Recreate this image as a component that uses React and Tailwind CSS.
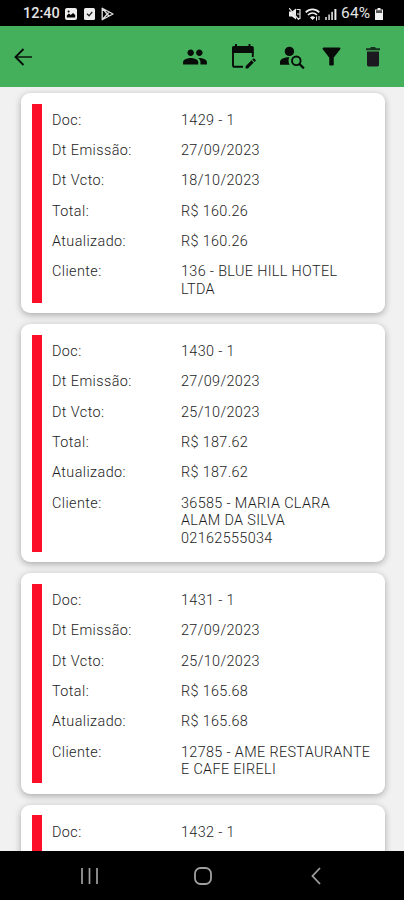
import { MdFilterAlt, MdPeople } from 'react-icons/md'

const documents = [
  { doc: '1429 - 1', issued: '27/09/2023', due: '18/10/2023', total: 'R$ 160.26', updated: 'R$ 160.26', client: ['136 - BLUE HILL HOTEL', 'LTDA'] },
  { doc: '1430 - 1', issued: '27/09/2023', due: '25/10/2023', total: 'R$ 187.62', updated: 'R$ 187.62', client: ['36585 - MARIA CLARA', 'ALAM DA SILVA', '02162555034'] },
  { doc: '1431 - 1', issued: '27/09/2023', due: '25/10/2023', total: 'R$ 165.68', updated: 'R$ 165.68', client: ['12785 - AME RESTAURANTE', 'E CAFE EIRELI'] },
  { doc: '1432 - 1' },
]

function StatusBar() {
  return (
    <div className="h-[26px] shrink-0 bg-black text-[#e4e4e4] flex items-center pl-[23px] pr-[21px]">
      <span className="text-[14.5px] leading-none font-medium w-[42px] mt-[2px]">12:40</span>
      <svg viewBox="0 0 12 12" className="w-[12px] h-[12px] mt-[2px]">
        <rect width="12" height="12" rx="2" fill="#eee" />
        <path d="M1.8 9.5v-2l2-2 2 1.6 2.2-2 2.2 2v2.4z" fill="#000" />
        <circle cx="3.6" cy="3.5" r="1" fill="#000" />
      </svg>
      <svg viewBox="0 0 11 12" className="w-[11px] h-[12px] ml-[7px] mt-[2px]">
        <rect width="11" height="12" rx="1.5" fill="#eee" />
        <path d="M3 5.8l2 2 3.2-3.8" fill="none" stroke="#222" strokeWidth="1.3" />
      </svg>
      <svg viewBox="0 0 13 14" className="w-[13px] h-[14px] ml-[6px] mt-[2px]" fill="none" stroke="#ddd" strokeWidth="1.3">
        <path d="M1.2 1.2v11.6L12 7zM1.2 1.2L8 9M1.2 12.8L8 5" strokeLinejoin="round" />
      </svg>
      <div className="ml-auto flex items-center mt-[2px]">
        <svg viewBox="0 0 12 12" className="w-[12px] h-[12px]">
          <path d="M0 3.5h3l4-3v11l-4-3H0z" fill="#eee" />
          <path d="M0 0l10 12M7.5 1.5H11v9H8M8 6h3" stroke="#ddd" strokeWidth="1.2" fill="none" />
        </svg>
        <svg viewBox="0 0 16 13" className="w-[16px] h-[13px] ml-[4px]" fill="none" stroke="#eee" strokeWidth="1.6">
          <path d="M.7 4.4C4.5.3 10.5.3 14.3 4.4M3 7c2.6-2.7 6.4-2.7 9 0" />
          <path d="M5 9.5c1.6-1.7 3.6-1.7 5.2 0L7.6 12z" fill="#eee" stroke="none" />
          <path d="M11.5 8.5v4M14 8v4" strokeWidth="1" />
        </svg>
        <svg viewBox="0 0 12 12" className="w-[12px] h-[12px] ml-[4px]">
          <rect x="0" y="9" width="2" height="3" fill="#aaa" />
          <rect x="3.2" y="6.5" width="1.8" height="5.5" fill="#bbb" />
          <rect x="6.2" y="3.8" width="1.8" height="8.2" fill="#ccc" />
          <rect x="9.4" y="1" width="2" height="11" fill="#eee" />
        </svg>
        <span className="text-[15.5px] leading-none ml-[4px] w-[34px] tracking-[0.2px]">64%</span>
        <svg viewBox="0 0 8 12" className="w-[8px] h-[12px]">
          <path d="M2.5 0h3v1.5H8V12H0V1.5h2.5z" fill="#f2f2f2" />
          <rect x="1" y="2.2" width="6" height="2.8" fill="#555" />
        </svg>
      </div>
    </div>
  )
}

function CalendarEditIcon() {
  return (
    <svg viewBox="0 0 24 26" className="w-[24px] h-[26px] ml-[24px]">
      <path d="M0 3.5A1.5 1.5 0 0 1 1.5 2H3V0h2v2h11.500V0h2v2H20a1.800 1.800 0 0 1 1.800 1.800V9H0z" fill="currentColor" />
      <path d="M1 8v13.200c0 1 .6 1.600 1.600 1.600H11M20.800 8v5" fill="none" stroke="currentColor" strokeWidth="1.9" />
      <path d="M13.6 22.2l5.9-5.9 2.3 2.3-5.9 5.9h-2.3zM20.2 15.6l1-1c.3-.3.7-.3 1 0l1.4 1.4c.3.3.3.7 0 1l-1 1z" fill="currentColor" />
    </svg>
  )
}

function PersonSearchIcon() {
  return (
    <svg viewBox="0 0 25 24" className="w-[25px] h-[24px] ml-[24px] mt-[3px]">
      <circle cx="9.4" cy="5.4" r="4.7" fill="currentColor" />
      <path d="M0 18.8V16c0-2.9 4-4.6 9.4-4.7-1.2 2.3-1.3 5 .2 7.500z" fill="currentColor" />
      <circle cx="16.3" cy="14.8" r="4.3" fill="none" stroke="currentColor" strokeWidth="1.9" />
      <path d="M19.2 17.7l4.7 4.7" stroke="currentColor" strokeWidth="2.2" />
    </svg>
  )
}

function TrashIcon() {
  return (
    <svg viewBox="0 0 14 20" className="w-[14px] h-[20px] ml-[21px]">
      <path d="M0 1.200h4L5 0h4l1 1.200h4v2H0z" fill="#17301d" />
      <path d="M1 4.600h12v13.200c0 1-.7 1.700-1.700 1.700H2.700c-1 0-1.700-.7-1.700-1.700z" fill="#1c1a20" />
    </svg>
  )
}

function AppBar() {
  return (
    <header className="h-[61px] shrink-0 bg-[#45b05c] flex items-center text-[#070c08] pl-[14px] pr-[24px]">
      <svg viewBox="0 0 18 18" className="w-[18px] h-[18px]" fill="none" stroke="currentColor" strokeWidth="1.8">
        <path d="M9.5 1l-8 8 8 8" />
        <path d="M2 9h16" strokeWidth="1.4" />
      </svg>
      <div className="ml-auto flex items-center">
        <MdPeople className="w-[26px] h-[26px]" />
        <CalendarEditIcon />
        <PersonSearchIcon />
        <MdFilterAlt className="w-[27px] h-[27px] ml-[13px]" />
        <TrashIcon />
      </div>
    </header>
  )
}

function Row({ label, value }) {
  if (!value) return null
  const lines = Array.isArray(value) ? value : [value]
  return (
    <div className="flex pt-[8.2px] pb-[4.6px]">
      <span className="w-[129px] shrink-0 tracking-[0.42px]">{label}</span>
      <div className="whitespace-nowrap tracking-[0.35px]">
        {lines.map((line) => (
          <p key={line}>{line}</p>
        ))}
      </div>
    </div>
  )
}

function DocumentCard({ item }) {
  return (
    <article className="shrink-0 min-h-[220px] bg-white rounded-[9px] p-[10.5px] flex shadow-[0_2px_7px_rgba(0,0,0,0.3)]">
      <div className="w-[10px] shrink-0 bg-[#fb0f28]" />
      <div className="ml-[10.5px] text-[14.4px] leading-[17.5px] font-light text-[#1c1c1c]">
        <Row label="Doc:" value={item.doc} />
        <Row label="Dt Emissão:" value={item.issued} />
        <Row label="Dt Vcto:" value={item.due} />
        <Row label="Total:" value={item.total} />
        <Row label="Atualizado:" value={item.updated} />
        <Row label="Cliente:" value={item.client} />
      </div>
    </article>
  )
}

function NavBar() {
  return (
    <nav className="h-[49px] shrink-0 bg-black flex items-center pl-[81px]">
      <svg viewBox="0 0 17 18" className="w-[17px] h-[18px]" stroke="#a0a0a0" strokeWidth="1.7">
        <path d="M1 1v16M8.5 1v16M16 1v16" />
      </svg>
      <svg viewBox="0 0 18 18" className="w-[18px] h-[18px] ml-[95.5px]" fill="none" stroke="#a0a0a0" strokeWidth="1.8">
        <rect x="1" y="1" width="16" height="16" rx="5.5" />
      </svg>
      <svg viewBox="0 0 10 18" className="w-[10px] h-[18px] ml-[99.5px]" fill="none" stroke="#a0a0a0" strokeWidth="1.8">
        <path d="M9 1L1.5 9 9 17" />
      </svg>
    </nav>
  )
}

export default function App() {
  return (
    <div className="w-[404px] h-[900px] flex flex-col overflow-hidden bg-[#f1f1f1] font-['Roboto',sans-serif]">
      <StatusBar />
      <AppBar />
      <main className="flex-1 min-h-0 overflow-hidden flex flex-col gap-[11.3px] pt-[6px] pl-[21px] pr-[19.5px]">
        {documents.map((item) => (
          <DocumentCard key={item.doc} item={item} />
        ))}
      </main>
      <NavBar />
    </div>
  )
}
